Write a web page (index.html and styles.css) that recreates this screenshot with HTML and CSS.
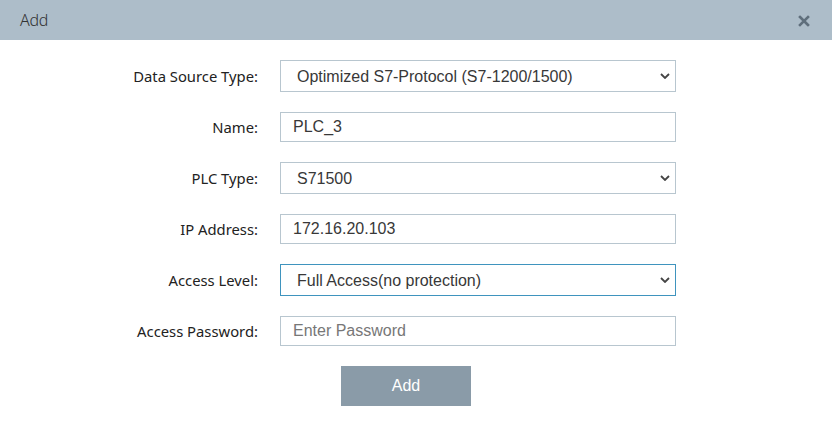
FILE: index.html
```html
<!DOCTYPE html>
<html>
<head>
<meta charset="utf-8">
<link rel="stylesheet" href="styles.css">
</head>
<body>
<div class="dialog">
  <div class="header">
    <span class="title">Add</span>
    <span class="close"><svg width="12" height="12" viewBox="0 0 12 12"><path d="M2 2 L10 10 M10 2 L2 10" stroke="#5f6f7c" stroke-width="2.6" stroke-linecap="square"/></svg></span>
  </div>
  <div class="body">
    <form class="form">
      <label class="lbl">Data Source Type:</label>
      <div class="selwrap">
        <select class="field sel"><option>Optimized S7-Protocol (S7-1200/1500)</option></select>
        <svg class="chev" width="10" height="6" viewBox="0 0 10 6"><path d="M1 1 L5 5 L9 1" fill="none" stroke="#444" stroke-width="1.8"/></svg>
      </div>
      <label class="lbl">Name:</label>
      <input class="field inp" type="text" value="PLC_3">
      <label class="lbl">PLC Type:</label>
      <div class="selwrap">
        <select class="field sel"><option>S71500</option></select>
        <svg class="chev" width="10" height="6" viewBox="0 0 10 6"><path d="M1 1 L5 5 L9 1" fill="none" stroke="#444" stroke-width="1.8"/></svg>
      </div>
      <label class="lbl">IP Address:</label>
      <input class="field inp" type="text" value="172.16.20.103">
      <label class="lbl">Access Level:</label>
      <div class="selwrap">
        <select class="field sel focus"><option>Full Access(no protection)</option></select>
        <svg class="chev" width="10" height="6" viewBox="0 0 10 6"><path d="M1 1 L5 5 L9 1" fill="none" stroke="#444" stroke-width="1.8"/></svg>
      </div>
      <label class="lbl">Access Password:</label>
      <input class="field inp" type="password" placeholder="Enter Password">
    </form>
    <div class="actions">
      <button class="btn" type="button">Add</button>
    </div>
  </div>
</div>
</body>
</html>
```
FILE: styles.css
```css
* { box-sizing: border-box; }
html, body { margin: 0; padding: 0; background: #fff; }
body { font-family: "Noto Sans", sans-serif; }
.dialog { width: 832px; height: 425px; background: #fff; }
.header {
  height: 40px;
  background: #adbdc9;
  display: flex;
  align-items: center;
  justify-content: space-between;
  padding: 0 22px 0 20px;
}
.title { font-family: "Noto Sans", sans-serif; font-size: 16px; font-weight: 300; color: #333; letter-spacing: -0.3px; }
.close { display: flex; align-items: center; padding-top: 1px; }
.body { padding-top: 20px; padding-right: 20px; }
.form {
  display: grid;
  grid-template-columns: 258px 396px;
  column-gap: 22px;
  row-gap: 20px;
  align-items: center;
}
.lbl {
  text-align: right;
  font-size: 14.8px;
  color: #222;
}
.selwrap { position: relative; width: 396px; height: 32px; }
.chev { position: absolute; right: 6px; top: 13px; pointer-events: none; }
.field {
  width: 396px;
  border: 1px solid #b8c6cf;
  border-radius: 0;
  background: #fff;
  font-family: "Liberation Sans", Arial, sans-serif;
  font-size: 16px;
  color: #383838;
  outline: none;
}
.sel { height: 32px; padding: 0 24px 0 16px; appearance: none; -webkit-appearance: none; display: block; }
.inp { height: 30px; padding: 0 12px; }
.inp::placeholder { color: #777; }
.focus { border-color: #3f94be; }
.actions { display: flex; justify-content: center; padding-top: 20px; }
.btn {
  width: 130px;
  height: 40px;
  border: none;
  background: #8a9ba8;
  color: #fff;
  font-family: "Liberation Sans", Arial, sans-serif;
  font-size: 16px;
}
```
